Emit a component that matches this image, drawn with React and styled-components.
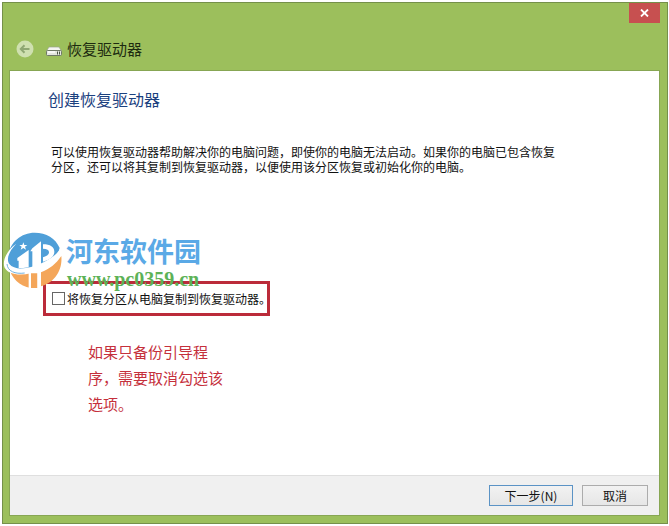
import React from "react";
import styled, { createGlobalStyle } from "styled-components";

const Global = createGlobalStyle`
  *, *::before, *::after { box-sizing: border-box; }
  body {
    margin: 0;
    background: #fff;
    font-family: "Noto Sans CJK SC", sans-serif;
    font-size: 12px;
    color: #111;
  }
  h1, h2, p { margin: 0; font-weight: 400; }
  button { font-family: inherit; padding: 0; }
`;

const Frame = styled.div`
  display: flex;
  flex-direction: column;
  min-height: calc(100vh - 4px);
  margin: 2px 1px 2px 2px;
  padding: 0 7px 7px 6px;
  background: #9cbf5c;
  border: 1px solid #75904a;
`;

const TitleBar = styled.header`
  display: flex;
  justify-content: space-between;
  align-items: flex-start;
  height: 67px;
`;

const TitleGroup = styled.div`
  display: flex;
  align-items: center;
  align-self: flex-end;
  height: 42px;
  padding-left: 7px;
`;

const BackButton = styled.button`
  display: flex;
  border: 0;
  background: none;
  margin-right: 12px;
`;

const Title = styled.h1`
  margin-left: 5px;
  font-size: 15px;
  line-height: 20px;
  color: #1d2b10;
`;

const CloseButton = styled.button`
  display: grid;
  place-items: center;
  width: 31px;
  height: 20px;
  border: 0;
  background: #c75050;
`;

const Panel = styled.main`
  display: flex;
  flex: 1;
  flex-direction: column;
  border: 1px solid #87a653;
  background: #fff;
`;

const Content = styled.section`
  position: relative;
  flex: 1;
  padding: 17px 33px 24px;
`;

const Heading = styled.h2`
  padding-left: 5px;
  font-size: 16px;
  line-height: 22px;
  color: #1b417f;
`;

const Description = styled.p`
  max-width: 522px;
  margin-top: 34px;
  padding-left: 8px;
  line-height: 15px;
`;

const Option = styled.label`
  display: flex;
  align-items: center;
  width: fit-content;
  height: 35px;
  margin-top: 107px;
  padding: 0 0 0 6px;
  border: 3px solid #bb2b3a;
  white-space: nowrap;
`;

const OptionText = styled.span`
  width: 200px;
`;

const CheckBox = styled.input`
  appearance: none;
  flex: none;
  width: 13px;
  height: 13px;
  margin: 0 2px 0 0;
  border: 1px solid #666;
  background: #fff;
  &:checked { background: #3d7fb5; }
`;

const Note = styled.p`
  width: 141px;
  margin: 23px 0 0 45px;
  font-size: 15px;
  line-height: 26px;
  color: #c5303c;
`;

const Watermark = styled.div`
  position: absolute;
  top: 157px;
  left: -8px;
  display: flex;
  pointer-events: none;
`;

const SiteName = styled.div`
  padding-top: 5px;
  font-size: 27px;
  font-weight: 700;
  line-height: 35px;
  color: #5aa9e6;
`;

const SiteAddress = styled.div`
  padding-left: 1px;
  font-family: "Liberation Serif", serif;
  font-size: 20px;
  font-weight: 700;
  line-height: 22px;
  color: #5db257;
`;

const Footer = styled.footer`
  display: flex;
  justify-content: flex-end;
  align-items: center;
  gap: 9px;
  height: 40px;
  padding-right: 11px;
  border-top: 1px solid #dfdfdf;
  background: #f0f0f0;
`;

const ActionButton = styled.button`
  width: ${({ $primary }) => ($primary ? 84 : 66)}px;
  height: 21px;
  border: 1px solid ${({ $primary }) => ($primary ? "#5b93c5" : "#acacac")};
  background: linear-gradient(#f2f2f2, #e6e6e6);
  font-size: 12px;
  line-height: 18px;
  color: #111;
`;

const BackIcon = () => (
  <svg width="18" height="18" viewBox="0 0 18 18" aria-hidden="true">
    <circle cx="9" cy="9" r="8.5" fill="#cfe0b0" />
    <path d="M13.5 9H5M8.5 5.2 4.8 9l3.7 3.8" fill="none" stroke="#8fa773" strokeWidth="2" />
  </svg>
);

const DriveIcon = () => (
  <svg width="16" height="18" viewBox="0 0 16 18" aria-hidden="true">
    <path d="M3 7h10l2.5 4H.5Z" fill="#f4f5f1" stroke="#98a38b" strokeWidth=".7" />
    <rect x=".5" y="10.5" width="15" height="5" rx="1" fill="#e4e7df" stroke="#6f7a66" />
    <path d="M2 12h7" stroke="#fff" strokeWidth="1.5" />
    <path d="M11.5 11.5v3M13.5 11.5v3" stroke="#4c5746" />
  </svg>
);

const CloseIcon = () => (
  <svg width="9" height="8" viewBox="0 0 9 8" aria-hidden="true">
    <path d="m1 .5 7 7M8 .5l-7 7" stroke="#fff" strokeWidth="1.8" />
  </svg>
);

const SiteLogo = () => (
  <svg width="64" height="64" viewBox="0 0 192 192" aria-hidden="true">
    <path d="M17 96C18 48 54 14 98 14c35 0 63 17 75 46-1 12-8 22-20 31-38 29-92 50-125 31-8-6-12-14-11-26Z" fill="#4f9fd8" />
    <path d="M178 84c4 42-20 80-61 91v-42c25-10 45-25 61-49ZM24 128c10 6 20 8 30 8h52v44c-38 3-70-17-82-52Z" fill="#f4a65a" />
    <path d="M46 90 80 66v52c-10 2-20 3-30 2V98h-4Z" fill="#fff" />
    <path d="M80 134h7v46h-7ZM107 130h10v50h-10Z" fill="#fff" />
    <path d="M91 61 117 40v68c-8 5-17 8-26 10V70h-6ZM123 49c22 0 34 8 34 22s-12 24-34 30V88c13-4 18-9 18-15 0-7-6-11-18-11Z" fill="#fff" />
    <path d="m64 43 3 8h9l-7 5 3 9-8-5-8 5 3-9-7-5h9Z" fill="#fff" />
    <path d="M43 47C20 70 12 94 22 108c15 20 58 16 98-3 38-18 60-39 54-56 13 21-8 52-50 73-48 23-101 24-116-3C-1 98 16 65 43 47Z" fill="#fff" />
    <path d="M15 108c2 22 24 31 53 27" fill="none" stroke="#73b2df" strokeWidth="3" />
  </svg>
);

export default function App() {
  return (
    <>
      <Global />
      <Frame>
        <TitleBar>
          <TitleGroup>
            <BackButton aria-label="返回"><BackIcon /></BackButton>
            <DriveIcon />
            <Title>恢复驱动器</Title>
          </TitleGroup>
          <CloseButton aria-label="关闭"><CloseIcon /></CloseButton>
        </TitleBar>
        <Panel>
          <Content>
            <Heading>创建恢复驱动器</Heading>
            <Description>
              可以使用恢复驱动器帮助解决你的电脑问题，即使你的电脑无法启动。如果你的电脑已包含恢复分区，还可以将其复制到恢复驱动器，以便使用该分区恢复或初始化你的电脑。
            </Description>
            <Option>
              <CheckBox type="checkbox" />
              <OptionText>将恢复分区从电脑复制到恢复驱动器。</OptionText>
            </Option>
            <Note>如果只备份引导程序，需要取消勾选该选项。</Note>
            <Watermark>
              <SiteLogo />
              <div>
                <SiteName>河东软件园</SiteName>
                <SiteAddress>www.pc0359.cn</SiteAddress>
              </div>
            </Watermark>
          </Content>
          <Footer>
            <ActionButton $primary>下一步(N)</ActionButton>
            <ActionButton>取消</ActionButton>
          </Footer>
        </Panel>
      </Frame>
    </>
  );
}
